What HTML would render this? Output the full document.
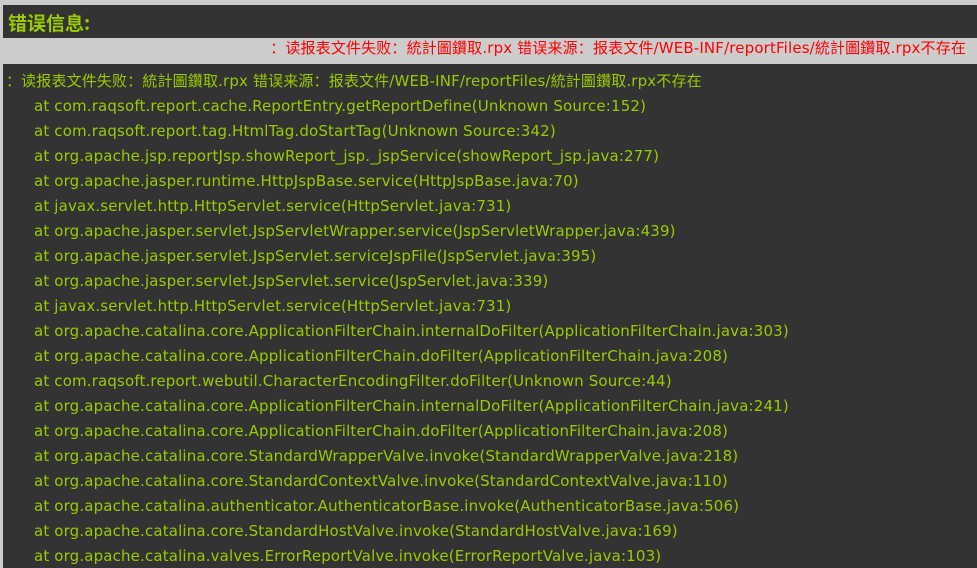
<!DOCTYPE html>
<html><head><meta charset="utf-8"><style>
html,body{margin:0;background:#cccccc;width:977px;height:568px;overflow:hidden;font-family:"DejaVu Sans","Noto Sans CJK SC",sans-serif;}
.h{position:absolute;left:3px;top:5px;width:974px;height:33px;background:#333333;color:#99cc00;font-weight:bold;font-size:19px;line-height:36px;padding-left:5px;box-sizing:border-box;font-family:"Noto Sans CJK SC",sans-serif;}
.r{position:absolute;right:11px;top:38px;color:#ff0000;font-size:15px;line-height:20px;white-space:nowrap;letter-spacing:0.15px;}
.b{position:absolute;left:3px;top:64px;width:974px;height:504px;overflow:hidden;background:#333333;color:#99cc00;font-size:15px;letter-spacing:0.15px;}
.b div{height:25px;line-height:34px;white-space:nowrap;padding-left:31px;}
.b div.f{padding-left:3px;}
</style></head><body>
<div class="h">错误信息:</div>
<div class="r">：读报表文件失败：統計圖鑽取.rpx 错误来源：报表文件/WEB-INF/reportFiles/統計圖鑽取.rpx不存在</div>
<div class="b">
<div class="f">：读报表文件失败：統計圖鑽取.rpx 错误来源：报表文件/WEB-INF/reportFiles/統計圖鑽取.rpx不存在</div>
<div>at com.raqsoft.report.cache.ReportEntry.getReportDefine(Unknown Source:152)</div>
<div>at com.raqsoft.report.tag.HtmlTag.doStartTag(Unknown Source:342)</div>
<div>at org.apache.jsp.reportJsp.showReport_jsp._jspService(showReport_jsp.java:277)</div>
<div>at org.apache.jasper.runtime.HttpJspBase.service(HttpJspBase.java:70)</div>
<div>at javax.servlet.http.HttpServlet.service(HttpServlet.java:731)</div>
<div>at org.apache.jasper.servlet.JspServletWrapper.service(JspServletWrapper.java:439)</div>
<div>at org.apache.jasper.servlet.JspServlet.serviceJspFile(JspServlet.java:395)</div>
<div>at org.apache.jasper.servlet.JspServlet.service(JspServlet.java:339)</div>
<div>at javax.servlet.http.HttpServlet.service(HttpServlet.java:731)</div>
<div>at org.apache.catalina.core.ApplicationFilterChain.internalDoFilter(ApplicationFilterChain.java:303)</div>
<div>at org.apache.catalina.core.ApplicationFilterChain.doFilter(ApplicationFilterChain.java:208)</div>
<div>at com.raqsoft.report.webutil.CharacterEncodingFilter.doFilter(Unknown Source:44)</div>
<div>at org.apache.catalina.core.ApplicationFilterChain.internalDoFilter(ApplicationFilterChain.java:241)</div>
<div>at org.apache.catalina.core.ApplicationFilterChain.doFilter(ApplicationFilterChain.java:208)</div>
<div>at org.apache.catalina.core.StandardWrapperValve.invoke(StandardWrapperValve.java:218)</div>
<div>at org.apache.catalina.core.StandardContextValve.invoke(StandardContextValve.java:110)</div>
<div>at org.apache.catalina.authenticator.AuthenticatorBase.invoke(AuthenticatorBase.java:506)</div>
<div>at org.apache.catalina.core.StandardHostValve.invoke(StandardHostValve.java:169)</div>
<div>at org.apache.catalina.valves.ErrorReportValve.invoke(ErrorReportValve.java:103)</div>
</div>
</body></html>
